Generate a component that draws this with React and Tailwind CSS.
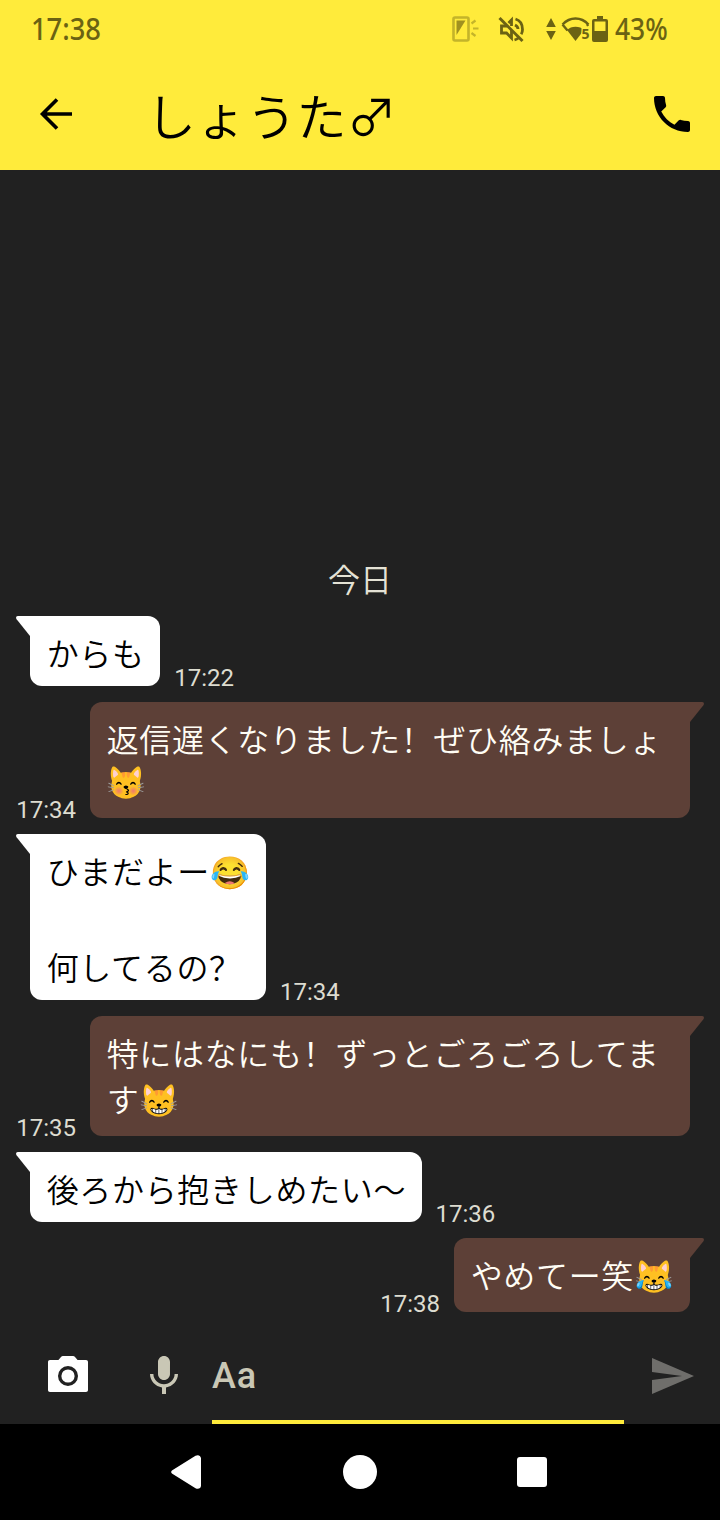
import { MdMic, MdPhone, MdSend } from 'react-icons/md'

const messages = [
  { time: '17:22', lines: ['からも'] },
  { time: '17:34', mine: true, wide: true, lines: ['返信遅くなりました！ぜひ絡みましょ', '😽'] },
  { time: '17:34', lines: ['ひまだよー😂', '', '何してるの？'], tall: 0 },
  { time: '17:35', mine: true, wide: true, lines: ['特にはなにも！ずっとごろごろしてま', 'す😸'], tall: 1 },
  { time: '17:36', lines: ['後ろから抱きしめたい〜'] },
  { time: '17:38', mine: true, lines: ['やめてー笑😹'], tall: 0 },
]

const StatusBar = () => (
  <div className="flex h-[58px] items-center pl-[31px] pr-[52px] font-['Noto_Sans',sans-serif] text-[30px] leading-none text-[#6b6213]">
    <span className="w-[76px] origin-left scale-x-[0.91] font-medium">17:38</span>
    <div className="ml-auto flex items-center">
      {/* Screen / flash indicator */}
      <svg className="h-[28px] w-[28px]" viewBox="0 0 28 28" fill="none" stroke="#c4b42a" strokeWidth="2.6">
        <rect x="1.500" y="2.500" width="15" height="23" rx="1.500" />
        <path d="M4.500 5.500h9L4.500 20z" fill="#a09120" stroke="none" />
        <path d="M19.500 8.500l4-3M21 13.500h5.500M19.500 18l4 3" strokeWidth="2.200" />
      </svg>
      {/* Muted */}
      <svg className="ml-[18px] h-[28px] w-[28px]" viewBox="0 0 28 28" fill="none" stroke="currentColor" strokeWidth="2.8">
        <path d="M9 11H3.500v7h5l5 5V15M10.500 8l3-3v6" />
        <path d="M17 10c2 1 3 2.600 3 4M17.500 4c5 1.500 7 6 7 10.500 0 2-.5 3.500-1.300 4.800M16.500 25c1.500-.4 2.800-1 4-2" />
        <path d="M1.500 3l23 23" strokeWidth="3" />
      </svg>
      {/* Wifi traffic */}
      <svg className="ml-[20px] h-[24px] w-[10px]" viewBox="0 0 10 24" fill="currentColor">
        <path d="M5 1l4.800 9H.2zM5 23l4.800-9H.2z" />
      </svg>
      <svg className="ml-[5px] h-[28px] w-[30px]" viewBox="0 0 30 28">
        <path d="M1.500 9.500C9 1.500 20 1.500 27.500 9.500M1.500 9.500l5 6M27.500 9.500l-2 1" fill="none" stroke="currentColor" strokeWidth="2.400" />
        <path d="M6 15c4-4.500 13-4.500 17 0L14.500 26z" fill="currentColor" />
        <text x="20.500" y="23.500" fontSize="14" fontWeight="700" fill="currentColor" stroke="#ffeb3b" strokeWidth="2.500" paintOrder="stroke">5</text>
      </svg>
      <svg className="ml-px h-[28px] w-[16px]" viewBox="0 0 16 28">
        <path d="M5 1h6v3h3a2 2 0 0 1 2 2v19a2 2 0 0 1-2 2H2a2 2 0 0 1-2-2V6a2 2 0 0 1 2-2h3z" fill="currentColor" />
        <path d="M2.500 6.500h11V16h-11z" fill="#ffeb3b" />
      </svg>
      <span className="ml-[7px] w-[53px] origin-left scale-x-[0.88] font-medium">43%</span>
    </div>
  </div>
)

const Header = () => (
  <header className="h-[170px] bg-[#ffeb3b] text-black">
    <StatusBar />
    <div className="flex h-[112px] items-center pl-8 pr-6">
      <svg className="size-12" viewBox="0 0 48 48" fill="none" stroke="currentColor" strokeWidth="3.6">
        <path d="M40 24H10.500M25 9.500L10.500 24 25 38.500" />
      </svg>
      <h1 className="ml-[66px] flex-1 font-['Noto_Sans_CJK_JP',sans-serif] text-[50px] font-[350] leading-none tracking-[0.2px]">しょうた♂</h1>
      <MdPhone className="size-12" />
    </div>
  </header>
)

const Tail = ({ mine }) => (
  <svg
    className={mine ? 'h-5 w-[14px] shrink-0 -scale-x-100 text-[#5d4037]' : 'h-5 w-[14px] shrink-0 text-white'}
    viewBox="0 0 14 20"
    fill="currentColor"
  >
    <path d="M14 0v20L.6 3.200C-.4 1.800 0 0 1.800 0z" />
  </svg>
)

// Full-width ！ and ？ sit on the left of their cell, as in the SC face
const Line = ({ text }) =>
  text.split(/([！？])/).map((part, i) =>
    i % 2 ? (
      <span key={i} lang="zh-CN" className="font-['Noto_Sans_CJK_SC',sans-serif]">
        {part}
      </span>
    ) : (
      part
    )
  )

const lineClass = (line, isTall) => {
  if (line === '😽') return 'h-[46px] leading-[38px]'
  return isTall ? 'h-[50px] leading-[46px]' : 'h-[46px] leading-[46px]'
}

const Message = ({ time, mine, wide, lines, tall }) => (
  <div className={mine ? 'flex flex-row-reverse' : 'flex'}>
    <Tail mine={mine} />
    <div
      className={`shrink-0 whitespace-nowrap pb-[11px] pl-[16.7px] pr-[15.5px] pt-[13px] text-[32px] font-[350] tracking-[0.67px] ${wide ? 'w-[600px]' : ''} ${
        mine ? 'rounded-xl rounded-tr-none bg-[#5d4037] text-[#fffdf5]' : 'rounded-xl rounded-tl-none bg-white text-black'
      }`}
    >
      {lines.map((line, i) => (
        <p key={i} className={lineClass(line, i === tall)}>
          <Line text={line} />
        </p>
      ))}
    </div>
    <time
      className={`-mb-[6px] self-end font-['Roboto',sans-serif] text-2xl leading-7 text-[#dddcd0] ${mine ? 'mr-[14px]' : 'ml-[14px]'}`}
    >
      {time}
    </time>
  </div>
)

const Composer = () => (
  <div className="flex h-24 items-start bg-[#212121] pl-11 pr-6">
    <svg className="mt-6 size-12 text-white" viewBox="0 0 24 24" fill="currentColor">
      <circle cx="12" cy="12" r="3.300" />
      <path d="M9.500 2c-.4 0-.8.200-1 .5L7.200 4H3c-.6 0-1 .4-1 1v14c0 .6.4 1 1 1h18c.6 0 1-.4 1-1V5c0-.6-.4-1-1-1h-4.200l-1.300-1.500c-.2-.3-.6-.5-1-.5zM12 17a5 5 0 1 1 0-10 5 5 0 0 1 0 10z" />
    </svg>
    <MdMic className="ml-12 mt-6 size-12 text-[#c9c7b5]" />
    <div className="ml-6 flex h-24 w-[412px] items-center border-b-4 border-[#ffeb3b] pt-1 font-['Roboto',sans-serif] text-4xl font-medium tracking-[0.8px] text-[#c9c7b5]">
      Aa
    </div>
    <MdSend className="ml-6 mt-6 size-12 text-[#6f6e6b]" />
  </div>
)

const NavBar = () => (
  <nav className="flex h-24 items-center justify-between bg-black pl-[171px] pr-[173px] text-white">
    <svg className="h-[34px] w-[31px]" viewBox="0 0 31 34" fill="currentColor">
      <path d="M1.300 15.200L24.500.8C27-.7 30 .5 30 3.500v27c0 3-3 4.200-5.500 2.700L1.300 18.800c-1.500-1-1.500-2.600 0-3.600z" />
    </svg>
    <div className="size-[34px] rounded-full bg-white" />
    <div className="size-[30px] rounded-[3px] bg-white" />
  </nav>
)

export default function App() {
  return (
    <div className="flex h-[1520px] w-[720px] flex-col overflow-hidden bg-[#212121] font-['Noto_Sans_CJK_JP','Noto_Color_Emoji',sans-serif]">
      <Header />
      <main className="flex flex-1 flex-col justify-end gap-4 px-4 pb-4">
        <p className="-mb-px text-center text-[32px] font-[350] leading-[46px] text-[#e4e2d5]">今日</p>
        {messages.map((m, i) => (
          <Message key={i} {...m} />
        ))}
      </main>
      <Composer />
      <NavBar />
    </div>
  )
}
